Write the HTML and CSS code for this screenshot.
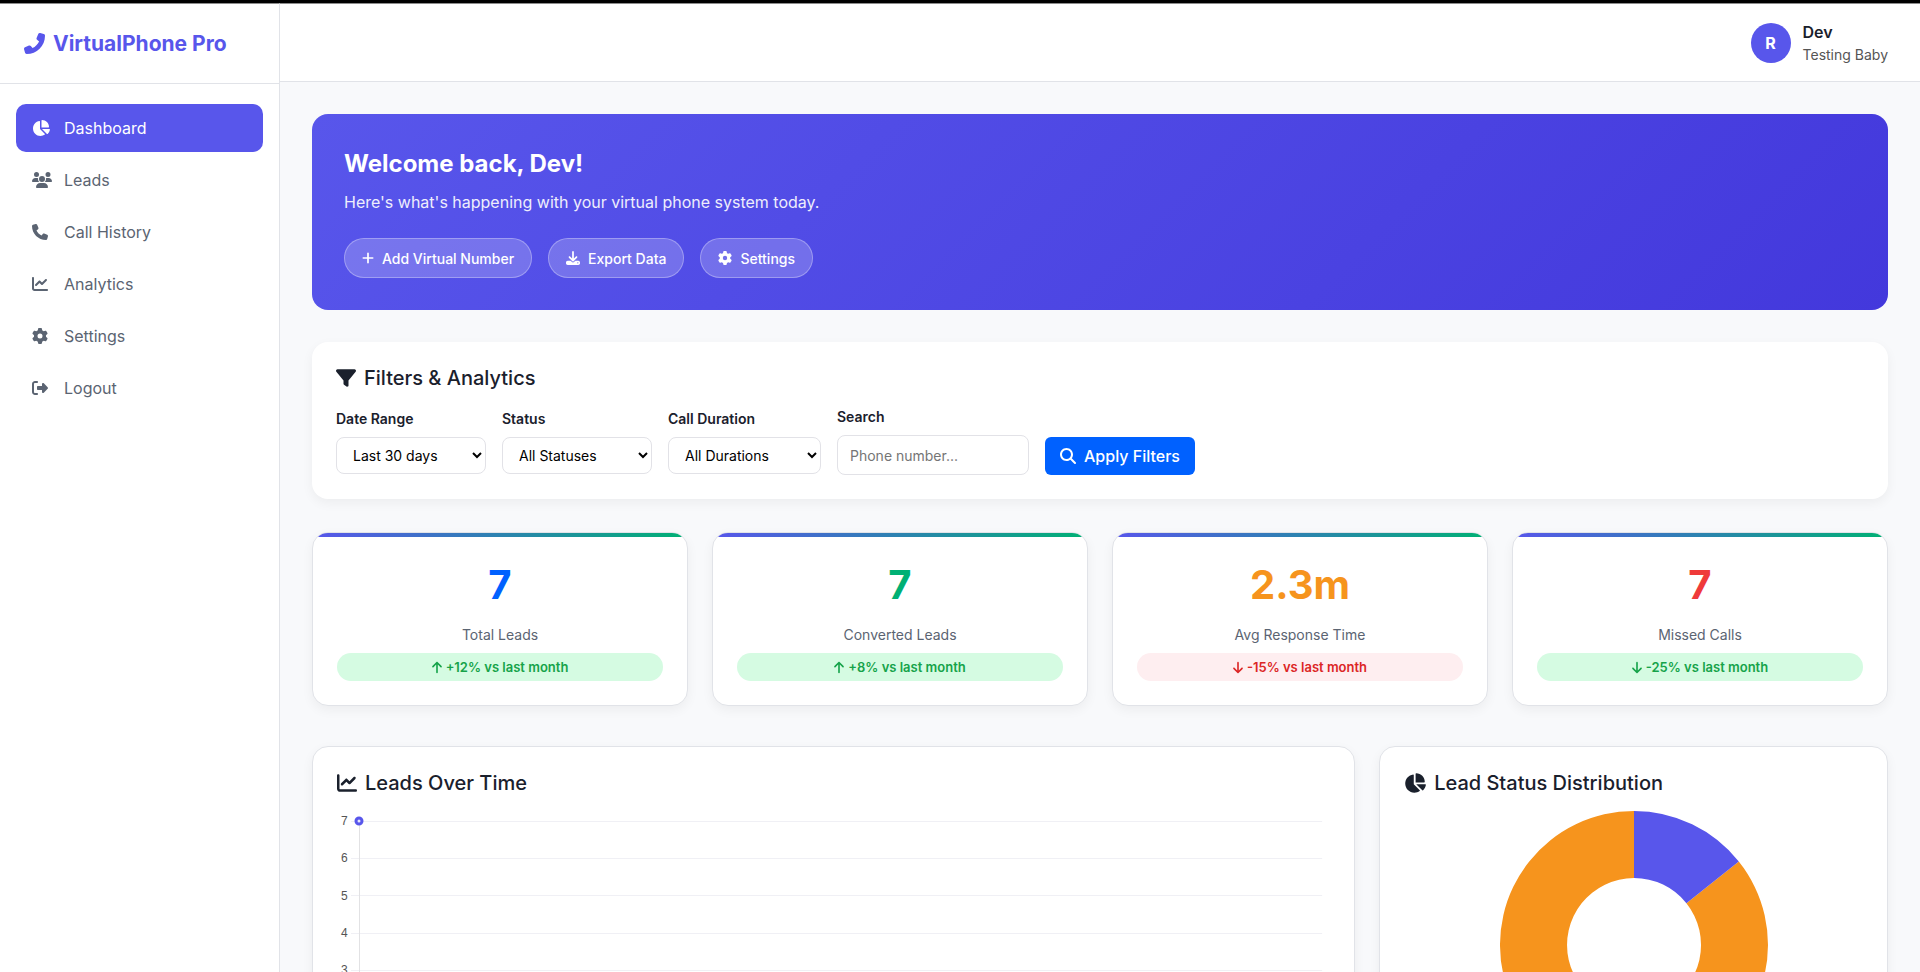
FILE: index.html
```html
<!DOCTYPE html>
<html lang="en">
<head>
<meta charset="utf-8">
<meta name="viewport" content="width=device-width, initial-scale=1">
<title>VirtualPhone Pro - Dashboard</title>
<link rel="stylesheet" href="styles.css">
</head>
<body>
<svg class="sprite" aria-hidden="true">
  <symbol id="phone" viewBox="0 0 512 512" preserveAspectRatio="xMinYMid meet"><path d="M164.900 24.600c-7.700-18.600-28-28.500-47.400-23.200l-88 24C12.100 30.200 0 46 0 64C0 311.400 200.600 512 448 512c18 0 33.800-12.100 38.600-29.500l24-88c5.300-19.400-4.600-39.700-23.200-47.400l-96-40c-16.300-6.800-35.200-2.100-46.300 11.600L304.700 368C234.300 334.700 177.300 277.700 144 207.300L193.300 167c13.700-11.200 18.400-30 11.600-46.300l-40-96z"/></symbol>
  <symbol id="phone-flip" viewBox="0 0 512 512"><path transform="translate(512 0) scale(-1 1)" d="M164.900 24.600c-7.700-18.600-28-28.500-47.400-23.200l-88 24C12.100 30.200 0 46 0 64C0 311.400 200.600 512 448 512c18 0 33.800-12.100 38.600-29.500l24-88c5.300-19.400-4.600-39.700-23.200-47.400l-96-40c-16.300-6.800-35.200-2.100-46.300 11.600L304.700 368C234.300 334.700 177.300 277.700 144 207.300L193.300 167c13.700-11.200 18.400-30 11.600-46.300l-40-96z"/></symbol>
  <symbol id="chart-pie" viewBox="0 0 576 512" preserveAspectRatio="xMinYMid meet"><path d="M304 240V16.600c0-9 7-16.600 16-16.600C443.700 0 544 100.300 544 224c0 9-7.600 16-16.600 16H304zM32 272C32 150.700 122.100 50.300 239 34.300c9.200-1.300 17 6.100 17 15.400V288L412.500 444.500c6.700 6.700 6.200 17.700-1.500 23.100C371.800 495.600 323.800 512 272 512C139.500 512 32 404.600 32 272zm526.400 16c9.300 0 16.600 7.800 15.400 17c-7.700 55.900-34.600 105.600-73.900 142.300c-6 5.600-15.400 5.200-21.200-.7L320 288H558.400z"/></symbol>
  <symbol id="users" viewBox="0 0 640 512"><path d="M144 0a80 80 0 1 1 0 160A80 80 0 1 1 144 0zM512 0a80 80 0 1 1 0 160A80 80 0 1 1 512 0zM0 298.700C0 239.800 47.800 192 106.700 192h42.700c15.900 0 31 3.500 44.600 9.700c-1.300 7.200-1.900 14.700-1.900 22.300c0 38.200 16.800 72.500 43.300 96c-.2 0-.4 0-.7 0H21.300C9.600 320 0 310.400 0 298.700zM405.300 320c-.2 0-.4 0-.7 0c26.600-23.500 43.300-57.800 43.300-96c0-7.600-.7-15-1.900-22.300c13.600-6.300 28.700-9.700 44.600-9.700h42.700C592.200 192 640 239.800 640 298.700c0 11.800-9.600 21.300-21.300 21.300H405.300zM224 224a96 96 0 1 1 192 0 96 96 0 1 1 -192 0zM128 485.300C128 411.700 187.700 352 261.300 352H378.700C452.300 352 512 411.700 512 485.300c0 14.700-11.900 26.700-26.700 26.700H154.700c-14.700 0-26.700-11.900-26.700-26.700z"/></symbol>
  <symbol id="chart-line" viewBox="0 0 512 512" preserveAspectRatio="xMinYMid meet"><path d="M64 64c0-17.700-14.300-32-32-32S0 46.300 0 64V400c0 44.200 35.800 80 80 80H480c17.700 0 32-14.300 32-32s-14.300-32-32-32H80c-8.800 0-16-7.200-16-16V64zm406.600 86.600c12.500-12.500 12.500-32.800 0-45.300s-32.800-12.500-45.300 0L320 210.700l-57.400-57.400c-12.500-12.500-32.800-12.500-45.300 0l-112 112c-12.500 12.500-12.500 32.800 0 45.300s32.800 12.500 45.300 0L240 221.300l57.400 57.400c12.500 12.500 32.800 12.500 45.300 0l128-128z"/></symbol>
  <symbol id="gear" viewBox="0 0 512 512" preserveAspectRatio="xMinYMid meet"><path d="M495.900 166.600c3.200 8.700 .5 18.400-6.400 24.600l-43.300 39.400c1.100 8.300 1.700 16.800 1.700 25.400s-.6 17.100-1.700 25.400l43.300 39.400c6.900 6.200 9.600 15.900 6.400 24.600c-4.400 11.900-9.700 23.300-15.800 34.300l-4.700 8.100c-6.600 11-14 21.400-22.100 31.200c-5.900 7.200-15.700 9.600-24.500 6.800l-55.700-17.700c-13.400 10.300-28.200 18.900-44 25.400l-12.500 57.100c-2 9.100-9 16.300-18.200 17.800c-13.800 2.300-28 3.500-42.500 3.500s-28.700-1.200-42.500-3.500c-9.200-1.500-16.200-8.700-18.200-17.800l-12.500-57.100c-15.800-6.500-30.600-15.100-44-25.400L83.100 425.900c-8.800 2.800-18.600 .3-24.500-6.800c-8.100-9.800-15.500-20.200-22.100-31.200l-4.700-8.100c-6.100-11-11.400-22.400-15.800-34.300c-3.200-8.700-.5-18.400 6.400-24.600l43.300-39.400C64.600 273.100 64 264.600 64 256s.6-17.100 1.700-25.400L22.400 191.200c-6.900-6.200-9.600-15.900-6.400-24.600c4.400-11.900 9.700-23.300 15.800-34.300l4.700-8.100c6.600-11 14-21.400 22.100-31.200c5.900-7.200 15.700-9.600 24.500-6.800l55.700 17.700c13.400-10.300 28.200-18.900 44-25.400l12.500-57.100c2-9.100 9-16.300 18.200-17.800C227.300 1.200 241.500 0 256 0s28.700 1.200 42.500 3.500c9.200 1.500 16.200 8.700 18.200 17.800l12.500 57.100c15.800 6.500 30.600 15.100 44 25.400l55.700-17.700c8.800-2.800 18.600-.3 24.500 6.800c8.100 9.800 15.500 20.200 22.100 31.200l4.700 8.100c6.100 11 11.400 22.400 15.800 34.300zM256 336a80 80 0 1 0 0-160 80 80 0 1 0 0 160z"/></symbol>
  <symbol id="logout" viewBox="0 0 512 512" preserveAspectRatio="xMinYMid meet"><path d="M377.900 105.900L500.700 228.700c7.200 7.200 11.300 17.100 11.300 27.300s-4.100 20.100-11.300 27.300L377.900 406.100c-6.400 6.400-15 9.900-24 9.900c-18.700 0-33.900-15.200-33.900-33.900l0-62.100-128 0c-17.700 0-32-14.300-32-32l0-64c0-17.700 14.300-32 32-32l128 0 0-62.100c0-18.700 15.200-33.900 33.900-33.900c9 0 17.600 3.600 24 9.900zM160 96L96 96c-17.700 0-32 14.300-32 32l0 256c0 17.700 14.300 32 32 32l64 0c17.700 0 32 14.300 32 32s-14.300 32-32 32l-64 0c-53 0-96-43-96-96L0 128C0 75 43 32 96 32l64 0c17.700 0 32 14.300 32 32s-14.300 32-32 32z"/></symbol>
  <symbol id="plus" viewBox="0 0 448 512"><path d="M256 80c0-17.700-14.300-32-32-32s-32 14.300-32 32V224H48c-17.700 0-32 14.300-32 32s14.300 32 32 32H192V432c0 17.700 14.300 32 32 32s32-14.300 32-32V288H400c17.700 0 32-14.300 32-32s-14.300-32-32-32H256V80z"/></symbol>
  <symbol id="download" viewBox="0 0 512 512"><path d="M288 32c0-17.700-14.300-32-32-32s-32 14.300-32 32V274.700l-73.400-73.400c-12.500-12.500-32.800-12.500-45.300 0s-12.500 32.800 0 45.300l128 128c12.500 12.500 32.800 12.500 45.300 0l128-128c12.500-12.500 12.500-32.800 0-45.300s-32.800-12.500-45.300 0L288 274.700V32zM64 352c-35.300 0-64 28.700-64 64v32c0 35.300 28.700 64 64 64H448c35.300 0 64-28.700 64-64V416c0-35.300-28.700-64-64-64H346.500l-45.300 45.300c-25 25-65.500 25-90.500 0L165.500 352H64zm368 56a24 24 0 1 1 0 48 24 24 0 1 1 0-48z"/></symbol>
  <symbol id="filter" viewBox="0 0 512 512"><path d="M3.900 54.900C10.500 40.900 24.500 32 40 32H472c15.500 0 29.500 8.900 36.100 22.900s4.600 30.500-5.200 42.500L320 320.900V448c0 12.100-6.800 23.200-17.700 28.600s-23.800 4.300-33.500-3l-64-48c-8.100-6-12.800-15.500-12.800-25.600V320.900L9 97.300C-.7 85.400-2.800 68.800 3.900 54.900z"/></symbol>
  <symbol id="search" viewBox="0 0 512 512"><path d="M416 208c0 45.900-14.900 88.300-40 122.700L502.600 457.400c12.500 12.500 12.500 32.800 0 45.300s-32.800 12.500-45.300 0L330.700 376c-34.400 25.200-76.800 40-122.700 40C93.100 416 0 322.900 0 208S93.100 0 208 0S416 93.100 416 208zM208 352a144 144 0 1 0 0-288 144 144 0 1 0 0 288z"/></symbol>
  <symbol id="arrow-up" viewBox="0 0 384 512"><path d="M214.600 41.400c-12.500-12.500-32.800-12.500-45.300 0l-160 160c-12.500 12.500-12.500 32.800 0 45.300s32.800 12.500 45.300 0L160 141.200V448c0 17.700 14.300 32 32 32s32-14.300 32-32V141.200L329.400 246.600c12.500 12.500 32.800 12.500 45.300 0s12.500-32.800 0-45.300l-160-160z"/></symbol>
  <symbol id="arrow-down" viewBox="0 0 384 512"><path d="M169.400 470.600c12.500 12.500 32.800 12.500 45.300 0l160-160c12.500-12.500 12.500-32.800 0-45.300s-32.800-12.500-45.300 0L224 370.800 224 64c0-17.700-14.300-32-32-32s-32 14.300-32 32l0 306.700L54.600 265.400c-12.500-12.500-32.800-12.500-45.300 0s-12.500 32.800 0 45.300l160 160z"/></symbol>
</svg>

<div class="app">
  <aside class="sidebar">
    <div class="brand">
      <svg class="icon icon-21"><use href="#phone-flip"/></svg>
      <span>VirtualPhone Pro</span>
    </div>
    <nav class="nav">
      <a class="nav-link active" href="#dashboard"><svg class="icon nav-icon"><use href="#chart-pie"/></svg>Dashboard</a>
      <a class="nav-link" href="#leads"><svg class="icon nav-icon"><use href="#users"/></svg>Leads</a>
      <a class="nav-link" href="#calls"><svg class="icon nav-icon"><use href="#phone"/></svg>Call History</a>
      <a class="nav-link" href="#analytics"><svg class="icon nav-icon"><use href="#chart-line"/></svg>Analytics</a>
      <a class="nav-link" href="#settings"><svg class="icon nav-icon"><use href="#gear"/></svg>Settings</a>
      <a class="nav-link" href="#logout-page"><svg class="icon nav-icon"><use href="#logout"/></svg>Logout</a>
    </nav>
  </aside>

  <div class="main">
    <header class="topbar">
      <div class="avatar">R</div>
      <div class="user">
        <div class="user-name">Dev</div>
        <div class="user-role">Testing Baby</div>
      </div>
    </header>

    <main class="content">
      <section class="welcome">
        <h1 class="welcome-title">Welcome back, Dev!</h1>
        <p class="welcome-text">Here's what's happening with your virtual phone system today.</p>
        <div class="welcome-actions">
          <button class="pill-button" type="button"><svg class="icon icon-14 narrow"><use href="#plus"/></svg>Add Virtual Number</button>
          <button class="pill-button" type="button"><svg class="icon icon-14"><use href="#download"/></svg>Export Data</button>
          <button class="pill-button" type="button"><svg class="icon icon-14"><use href="#gear"/></svg>Settings</button>
        </div>
      </section>

      <section class="filters">
        <h2 class="section-title"><svg class="icon icon-20"><use href="#filter"/></svg>Filters &amp; Analytics</h2>
        <form class="filter-row">
          <div class="field">
            <label for="range">Date Range</label>
            <select id="range"><option>Last 30 days</option><option>Last 7 days</option></select>
          </div>
          <div class="field">
            <label for="status">Status</label>
            <select id="status"><option>All Statuses</option></select>
          </div>
          <div class="field">
            <label for="duration">Call Duration</label>
            <select id="duration" class="wide"><option>All Durations</option></select>
          </div>
          <div class="field">
            <label for="search-box">Search</label>
            <input id="search-box" type="text" placeholder="Phone number...">
          </div>
          <button class="apply" type="button"><svg class="icon icon-16"><use href="#search"/></svg>Apply Filters</button>
        </form>
      </section>

      <section class="stats">
        <article class="card stat">
          <div class="stat-value blue">7</div>
          <div class="stat-label">Total Leads</div>
          <div class="trend good"><svg class="icon trend-icon"><use href="#arrow-up"/></svg>+12% vs last month</div>
        </article>
        <article class="card stat">
          <div class="stat-value green">7</div>
          <div class="stat-label">Converted Leads</div>
          <div class="trend good"><svg class="icon trend-icon"><use href="#arrow-up"/></svg>+8% vs last month</div>
        </article>
        <article class="card stat">
          <div class="stat-value orange">2.3m</div>
          <div class="stat-label">Avg Response Time</div>
          <div class="trend bad"><svg class="icon trend-icon"><use href="#arrow-down"/></svg>-15% vs last month</div>
        </article>
        <article class="card stat">
          <div class="stat-value red">7</div>
          <div class="stat-label">Missed Calls</div>
          <div class="trend good"><svg class="icon trend-icon"><use href="#arrow-down"/></svg>-25% vs last month</div>
        </article>
      </section>

      <section class="charts">
        <article class="card chart-card">
          <h2 class="section-title"><svg class="icon icon-20"><use href="#chart-line"/></svg>Leads Over Time</h2>
          <div class="line-chart">
            <svg class="plot" width="100%" height="300" role="img" aria-label="Leads over time">
              <g class="grid-lines">
                <line x1="14" x2="100%" y1="10.500" y2="10.500"/>
                <line x1="14" x2="100%" y1="47.500" y2="47.500"/>
                <line x1="14" x2="100%" y1="84.500" y2="84.500"/>
                <line x1="14" x2="100%" y1="122.500" y2="122.500"/>
                <line x1="14" x2="100%" y1="159.500" y2="159.500"/>
                <line x1="14" x2="100%" y1="196.500" y2="196.500"/>
                <line x1="14" x2="100%" y1="233.500" y2="233.500"/>
                <line x1="14" x2="100%" y1="270.500" y2="270.500"/>
                <line class="axis" x1="22.500" x2="22.500" y1="10" y2="279"/>
              </g>
              <g class="ticks">
                <text x="4" y="14">7</text>
                <text x="4" y="51">6</text>
                <text x="4" y="89">5</text>
                <text x="4" y="126">4</text>
                <text x="4" y="163">3</text>
                <text x="4" y="200">2</text>
                <text x="4" y="237">1</text>
                <text x="4" y="274">0</text>
              </g>
              <circle class="point" cx="22" cy="10" r="3"/>
            </svg>
          </div>
        </article>
        <article class="card chart-card">
          <h2 class="section-title"><svg class="icon icon-20 pie"><use href="#chart-pie"/></svg>Lead Status Distribution</h2>
          <svg class="donut" viewBox="0 0 268 300" width="268" height="300" role="img" aria-label="Lead status distribution">
            <path fill="#f6941d" d="M238.800 50.500A134 134 0 1 1 134 0V67A67 67 0 1 0 186.400 92.200Z"/>
            <path fill="#5856eb" d="M134 0A134 134 0 0 1 238.800 50.500L186.400 92.200A67 67 0 0 0 134 67Z"/>
          </svg>
        </article>
      </section>
    </main>
  </div>
</div>
</body>
</html>
```
FILE: styles.css
```css
* { box-sizing: border-box; margin: 0; padding: 0; }

:root {
  --primary: #5856eb;
  --ink: #1a202c;
  --muted: #5b6472;
  --line: #e1e3e8;
  --shadow: 0 4px 12px rgba(0, 0, 0, 0.05);
}

body {
  font-family: Inter, "Liberation Sans", sans-serif;
  font-size: 16px;
  line-height: 24px;
  color: var(--ink);
  background: #f8f9fb;
}

button, input, select { font-family: inherit; }

.sprite { display: none; }
.icon { fill: currentColor; flex: none; width: 16px; height: 16px; }
.icon-14 { width: 14px; height: 14px; }
.icon-14.narrow { width: 12px; }
.icon-20 { width: 20px; height: 20px; }
.icon-20.pie { width: 22px; }
.icon-21 { width: 21px; height: 21px; }

.app {
  display: flex;
  min-height: 100vh;
  border-top: 3px solid #000;
}

.sidebar {
  flex: none;
  width: 280px;
  background: #fff;
  border-right: 1px solid var(--line);
  border-top: 1px solid #8c8c8c;
}

.brand {
  display: flex;
  align-items: center;
  gap: 8px;
  min-height: 80px;
  padding: 0 24px;
  border-bottom: 1px solid var(--line);
  color: var(--primary);
  font-size: 21px;
  font-weight: 700;
}

.nav {
  display: flex;
  flex-direction: column;
  gap: 4px;
  padding: 20px 16px;
}

.nav-link {
  display: flex;
  align-items: center;
  gap: 12px;
  padding: 12px 16px;
  border-radius: 10px;
  color: var(--muted);
  text-decoration: none;
}
.nav-link.active {
  background: var(--primary);
  color: #fff;
}
.nav-icon { width: 20px; }

.main {
  flex: 1;
  min-width: 0;
}

.topbar {
  display: flex;
  align-items: center;
  justify-content: flex-end;
  gap: 12px;
  padding: 16px 32px;
  background: #fff;
  border-top: 1px solid #8c8c8c;
  border-bottom: 1px solid var(--line);
}
.avatar {
  display: grid;
  place-items: center;
  width: 40px;
  height: 40px;
  border-radius: 50%;
  background: var(--primary);
  color: #fff;
  font-weight: 700;
}
.user-name { font-weight: 600; }
.user-role { font-size: 14px; line-height: 21px; color: #555; }

.content { padding: 32px; }

.welcome {
  padding: 32px;
  border-radius: 16px;
  background: linear-gradient(135deg, #5856eb, #4338dc);
  color: #fff;
}
.welcome-title { font-size: 24px; line-height: 36px; font-weight: 700; }
.welcome-text { margin-top: 8px; opacity: 0.9; }
.welcome-actions { display: flex; gap: 16px; margin-top: 24px; }

.pill-button {
  display: flex;
  align-items: center;
  gap: 8px;
  height: 40px;
  padding: 0 17px;
  border: 1px solid rgba(255, 255, 255, 0.3);
  border-radius: 20px;
  background: rgba(255, 255, 255, 0.2);
  color: #fff;
  font-size: 14px;
  font-weight: 500;
}

.filters {
  margin-top: 32px;
  padding: 24px;
  border-radius: 16px;
  background: #fff;
  box-shadow: var(--shadow);
}
.section-title {
  display: flex;
  align-items: center;
  gap: 8px;
  margin-bottom: 16px;
  font-size: 20px;
  font-weight: 500;
}
.filter-row { display: flex; align-items: center; gap: 16px; }
.field { display: flex; flex-direction: column; gap: 8px; }
.field label { font-size: 14px; line-height: 21px; font-weight: 600; }
.field select, .field input {
  border: 1px solid #e2e2e7;
  border-radius: 8px;
  background: #fff;
  font-size: 14px;
}
.field select { width: 150px; height: 37px; padding: 0 12px; color: #000; }
.field select.wide { width: 153px; }
.field input { width: 192px; height: 40px; padding: 0 12px; }
.field input::placeholder { color: #757575; }
.apply {
  display: flex;
  align-items: center;
  align-self: flex-end;
  gap: 8px;
  height: 38px;
  padding: 0 15px;
  border: 0;
  border-radius: 6px;
  background: #0061ff;
  color: #fff;
  font-size: 16px;
  font-weight: 500;
}

.card {
  background: #fff;
  border: 1px solid var(--line);
  border-radius: 16px;
  box-shadow: var(--shadow);
  overflow: hidden;
}

.stats {
  display: grid;
  grid-template-columns: repeat(4, 1fr);
  gap: 24px;
  margin-top: 33px;
}
.stat { position: relative; padding: 24px; text-align: center; }
.stat::before {
  content: "";
  position: absolute;
  top: 0;
  left: 0;
  right: 0;
  height: 4px;
  background: linear-gradient(90deg, #5856eb, #00b074);
}
.stat-value { font-size: 40px; line-height: 56px; font-weight: 700; }
.stat-label { margin-top: 12px; font-size: 14px; line-height: 20px; color: var(--muted); }
.blue { color: #0061ff; }
.green { color: #00b074; }
.orange { color: #f6941d; }
.red { color: #ef3a3a; }

.trend {
  display: flex;
  align-items: center;
  justify-content: center;
  gap: 4px;
  height: 28px;
  margin-top: 8px;
  border-radius: 14px;
  font-size: 13px;
  font-weight: 600;
}
.trend-icon { width: 10px; height: 13px; }
.good { background: #d5fbe2; color: #16a34a; }
.bad { background: #feeef0; color: #dc2626; }

.charts {
  display: grid;
  grid-template-columns: 2.05fr 1fr;
  gap: 24px;
  margin-top: 40px;
}
.chart-card { padding: 24px; }
.line-chart { padding-right: 8px; }
.plot { display: block; overflow: visible; }
.grid-lines line { stroke: #f0f0f5; stroke-width: 1; }
.grid-lines .axis { stroke: #e2e2e4; }
.ticks text { font-family: "Liberation Sans", Arial, sans-serif; font-size: 12px; fill: #555; }
.point { fill: #e6e6fb; stroke: #5856eb; stroke-width: 3; }
.donut { display: block; margin: 0 auto; }
```
